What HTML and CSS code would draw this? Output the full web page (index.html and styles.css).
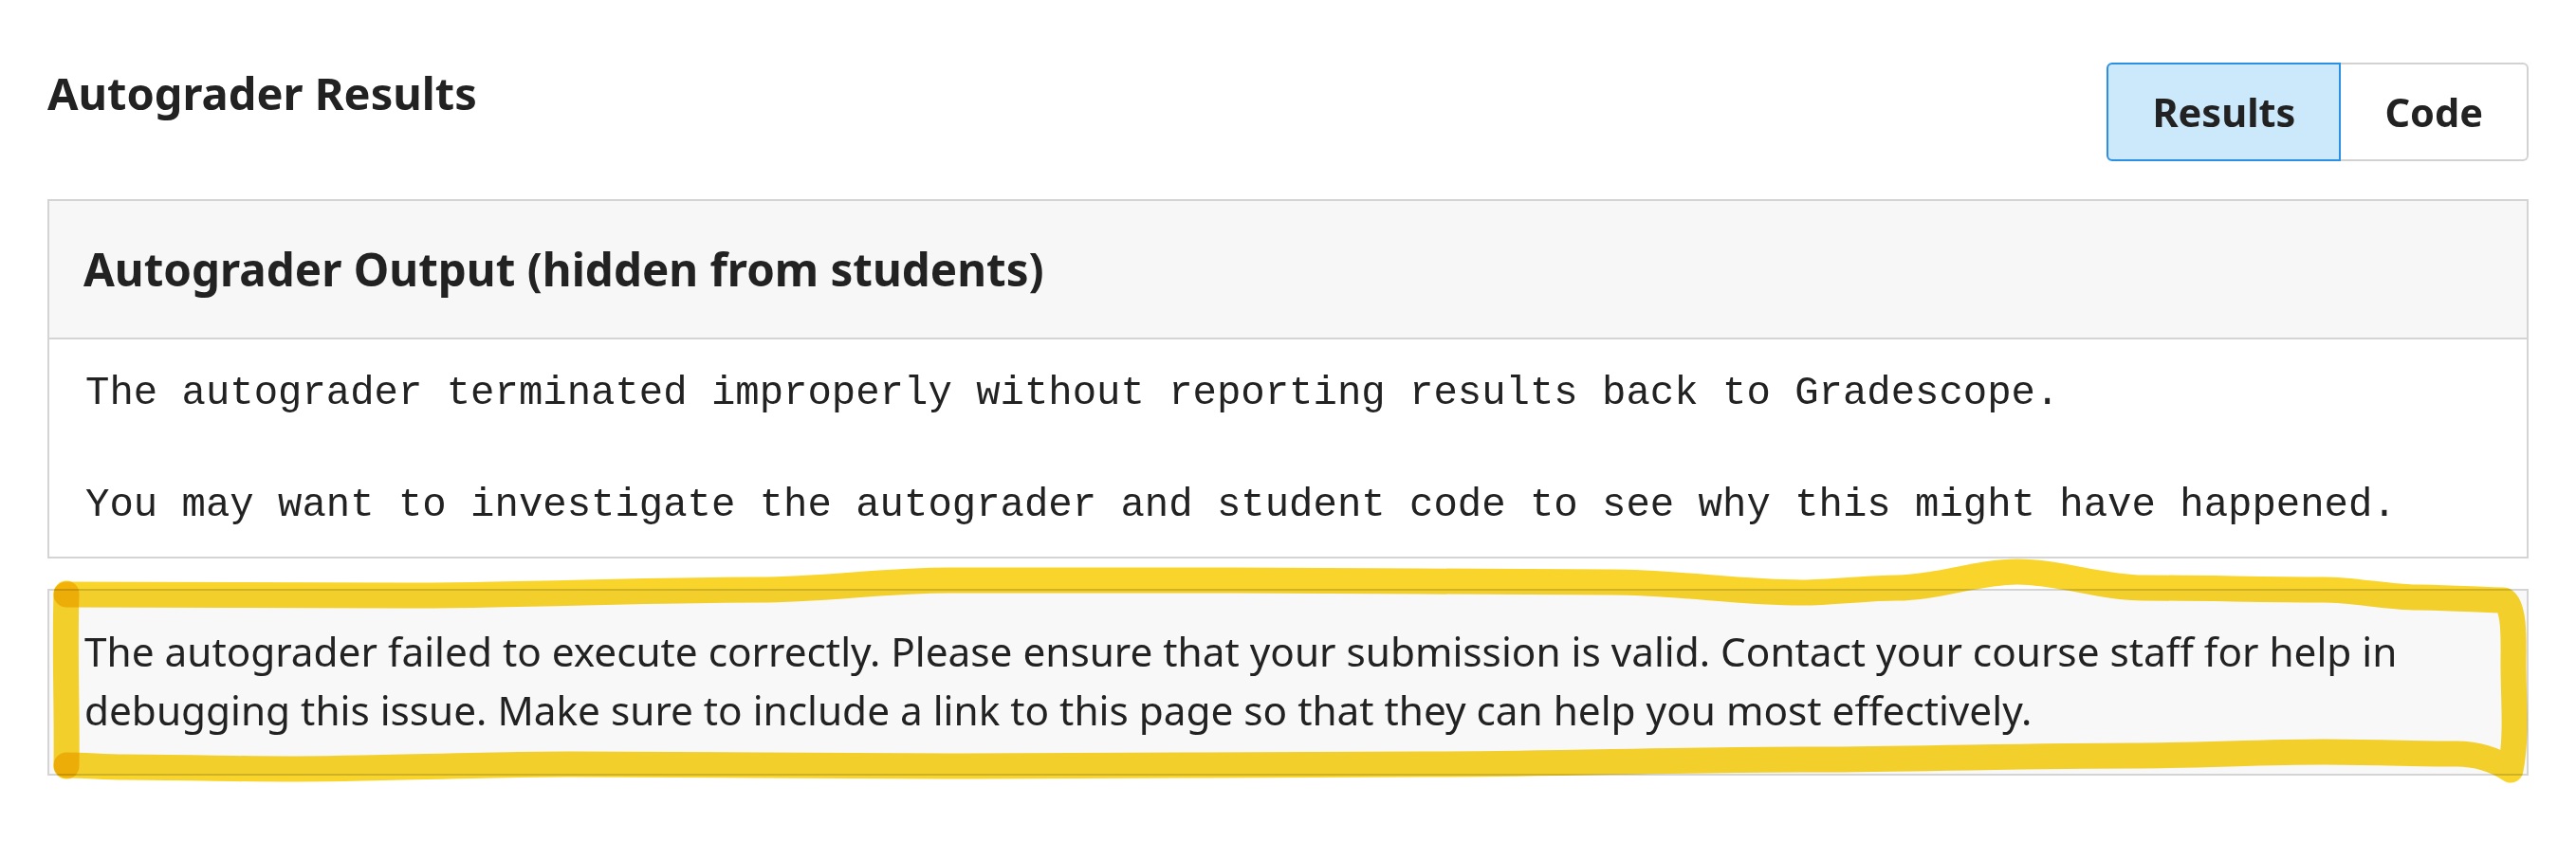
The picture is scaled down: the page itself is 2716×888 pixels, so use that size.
FILE: index.html
```html
<!DOCTYPE html>
<html lang="en">
<head>
<meta charset="utf-8">
<title>Autograder Results</title>
<link rel="stylesheet" href="styles.css">
</head>
<body>
<div class="page">
  <div class="top-row">
    <h1 class="title">Autograder Results</h1>
    <div class="toggle">
      <button class="toggle-btn is-active">Results</button>
      <button class="toggle-btn">Code</button>
    </div>
  </div>

  <section class="output-card">
    <div class="output-header">Autograder Output (hidden from students)</div>
    <pre class="output-body">The autograder terminated improperly without reporting results back to Gradescope.

You may want to investigate the autograder and student code to see why this might have happened.</pre>
  </section>

  <div class="notice">The autograder failed to execute correctly. Please ensure that your submission is valid. Contact your course staff for help in debugging this issue. Make sure to include a link to this page so that they can help you most effectively.</div>

  <svg class="highlight" viewBox="0 0 2716 888" width="2716" height="888" aria-hidden="true">
    <path class="stroke" d="M70 627 C190 627 310 628 430 628 C553 628 677 622 800 622 C867 622 933 612 1000 612 C1100 612 1200 612 1300 612 C1433 612 1567 614 1700 614 C1767 614 1833 625 1900 625 C1933 625 1967 620 2000 620 C2042 620 2085 603 2127 603 C2171 603 2216 620 2260 620 C2323 620 2387 622 2450 622 C2483 622 2517 630 2550 630 C2582 630 2613 633 2640 633 C2652 640 2650 680 2650 700 C2650 740 2654 775 2647 812 C2632 802 2612 795 2590 795 C2543 795 2497 793 2450 793 C2383 793 2317 797 2250 797 C2133 797 2017 801 1900 801 C1767 801 1633 806 1500 806 C1333 806 1167 808 1000 808 C867 808 733 806 600 806 C500 806 400 811 300 811 C243 811 187 809 130 809 C110 809 90 807 70 807"/>
    <path class="stroke" d="M70 626 C68 690 71 750 70 808"/>
  </svg>
</div>
</body>
</html>
```

FILE: styles.css
```css
html, body {
  margin: 0;
  padding: 0;
  background: #ffffff;
}

body {
  font-family: "Noto Sans", "Open Sans", "Liberation Sans", sans-serif;
  color: #222222;
}

.page {
  position: relative;
  width: 2716px;
  height: 888px;
  box-sizing: border-box;
  padding: 66px 50px 0 50px;
}

.top-row {
  display: flex;
  justify-content: space-between;
  align-items: flex-start;
}

.title {
  margin: 0;
  font-size: 47px;
  line-height: 64px;
  font-weight: 700;
  color: #222222;
}

.toggle {
  display: flex;
}

.toggle-btn {
  font-family: inherit;
  font-size: 41.5px;
  font-weight: 700;
  color: #222222;
  height: 104px;
  padding: 0 46px;
  background: #ffffff;
  border: 2px solid #d2d2d2;
  cursor: pointer;
}

.toggle-btn:first-child {
  border-radius: 6px 0 0 6px;
}

.toggle-btn:last-child {
  border-left: none;
  border-radius: 0 6px 6px 0;
}

.toggle-btn.is-active {
  background: #cce8fb;
  border-color: #2b8fe3;
}

.output-card {
  margin-top: 40px;
  border: 2px solid #d4d4d4;
  background: #ffffff;
}

.output-header {
  background: #f7f7f7;
  border-bottom: 2px solid #d4d4d4;
  padding: 41px 36px 41px 36px;
  font-size: 47.5px;
  line-height: 62px;
  font-weight: 700;
}

.output-body {
  margin: 0;
  padding: 28px 38px 24px 38px;
  font-family: "Liberation Mono", "Courier New", monospace;
  font-size: 42.3px;
  line-height: 59px;
  color: #222222;
  white-space: pre;
}

.notice {
  margin-top: 32px;
  border: 2px solid #d4d4d4;
  background: #f8f8f8;
  padding: 33px 36px 36px 37px;
  font-size: 42.3px;
  line-height: 62px;
  color: #222222;
}

.highlight {
  position: absolute;
  left: 0;
  top: 0;
  pointer-events: none;
  mix-blend-mode: multiply;
}

.stroke {
  fill: none;
  stroke: #f9d52c;
  stroke-width: 27;
  stroke-linecap: round;
  stroke-linejoin: round;
  mix-blend-mode: multiply;
}
```
